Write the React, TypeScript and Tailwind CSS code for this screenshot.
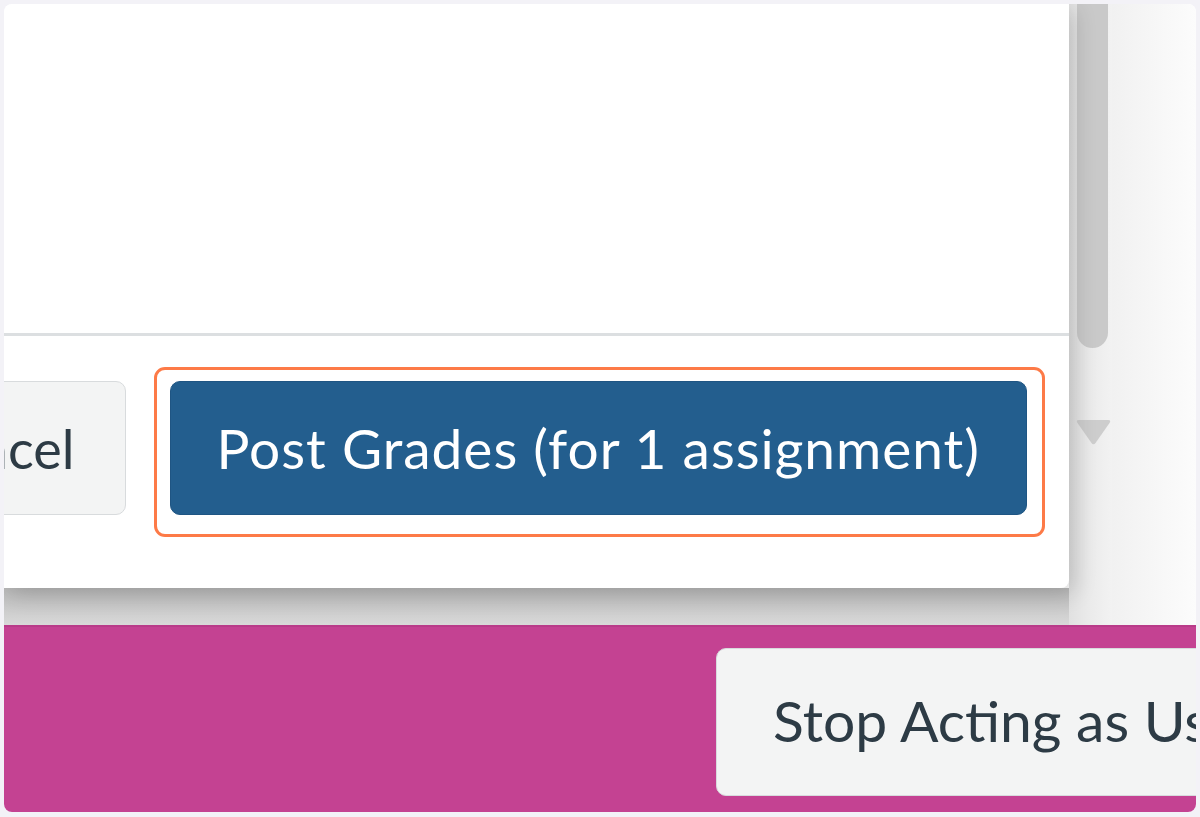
import type { ReactNode } from "react";

const LATO = "font-['Lato','Open_Sans',sans-serif]";

function ScrollTrack() {
  return (
    <div className="flex w-[43px] shrink-0 flex-col bg-gradient-to-r from-[#e1e1e1] via-[#ebebeb] to-[#f2f2f2]">
      <div className="ml-[8px] h-[344px] w-[31px] rounded-b-[16px] bg-[#c9c9c9]" />
      <svg
        className="ml-[6px] mt-[71px]"
        width="37"
        height="26"
        viewBox="0 0 37 26"
        aria-hidden
      >
        <path
          d="M4 1 H33 Q36.5 1 34.5 4 L20.5 24 Q18.5 26.5 16.5 24 L2.5 4 Q0.5 1 4 1 Z"
          fill="#cdcdcd"
        />
      </svg>
    </div>
  );
}

function GhostButton({ children, className = "" }: { children: ReactNode; className?: string }) {
  return (
    <button
      type="button"
      className={`flex shrink-0 whitespace-nowrap rounded-[10px] border border-[#d8dbdd] bg-[#f3f4f4] text-[#2d3b45] ${className}`}
    >
      {children}
    </button>
  );
}

export default function App() {
  return (
    <div className={`h-[817px] w-[1200px] bg-[#f3f2f7] pb-[5px] pl-[4px] pr-[4px] pt-[4px] ${LATO}`}>
      <div className="flex h-full flex-col overflow-hidden rounded-[8px] bg-white">
        {/* page area: modal, its scrollbar and the greyed page behind */}
        <div className="flex h-[621px] shrink-0">
          <div className="flex w-[1065px] shrink-0 flex-col">
            <section className="relative z-10 flex h-[584px] shrink-0 flex-col rounded-br-[8px] bg-white shadow-[6px_6px_22px_rgba(0,0,0,0.16)]">
              <div className="h-[329px] shrink-0" />
              <div className="h-[3px] shrink-0 bg-[#dcdfe1]" />
              <footer className="flex flex-1 items-start justify-end gap-[28px] overflow-hidden pr-[24px] pt-[31px]">
                <GhostButton className="mt-[14px] h-[134px] items-center pl-[48px] pr-[50px] text-[54px]">
                  Cancel
                </GhostButton>
                <div className="shrink-0 rounded-[11px] border-[3px] border-[#fd7a47] pb-[19px] pl-[13px] pr-[15px] pt-[11px]">
                  <button
                    type="button"
                    className="flex h-[134px] items-center whitespace-nowrap rounded-[10px] border border-[#1f5583] bg-[#235e8e] px-[46px] text-[55px] tracking-[1px] text-white"
                  >
                    Post Grades (for 1 assignment)
                  </button>
                </div>
              </footer>
            </section>
            <div className="flex-1 bg-gradient-to-b from-[#b9b9b9] to-[#d9d9d9]" />
          </div>
          <ScrollTrack />
          <div className="flex-1 bg-gradient-to-r from-[#f1f1f1] to-[#fcfcfc]" />
        </div>

        {/* masquerade bar */}
        <div className="flex flex-1 items-start overflow-hidden border-t-2 border-[#b93b89] bg-[#c44292] pl-[712px] pt-[21px]">
          <GhostButton className="h-[148px] items-start pl-[56px] pr-[56px] pt-[29px] text-[57px]">
            Stop Acting as User
          </GhostButton>
        </div>
      </div>
    </div>
  );
}
